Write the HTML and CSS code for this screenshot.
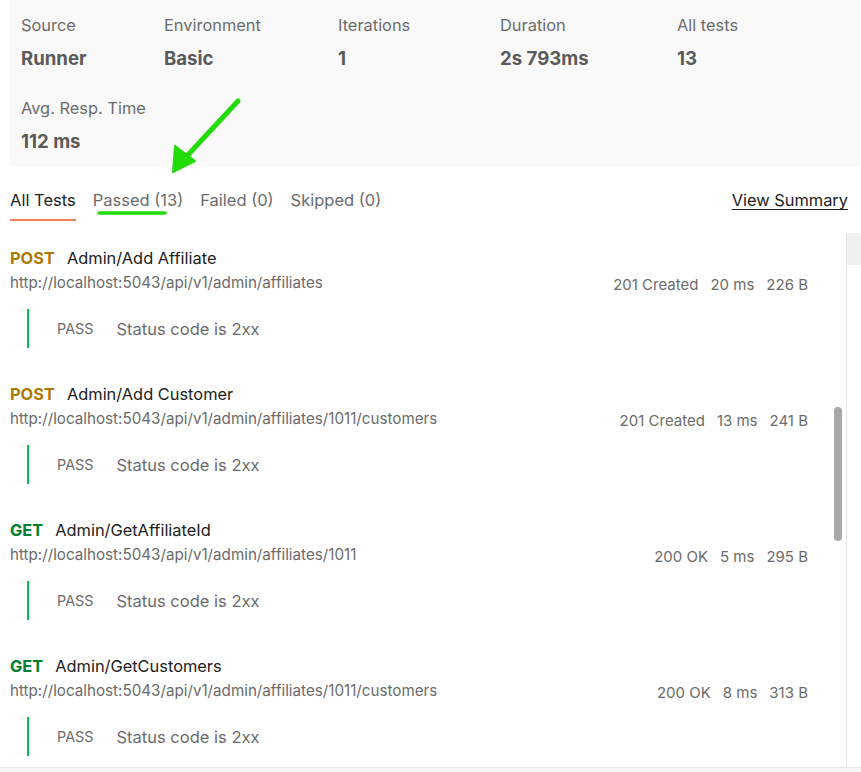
FILE: index.html
```html
<!DOCTYPE html>
<html lang="en">
<head>
<meta charset="utf-8">
<title>Run results</title>
<link rel="stylesheet" href="styles.css">
</head>
<body>
<div class="page">
  <section class="summary">
    <div class="stat"><span class="label">Source</span><span class="value">Runner</span></div>
    <div class="stat"><span class="label">Environment</span><span class="value">Basic</span></div>
    <div class="stat"><span class="label">Iterations</span><span class="value">1</span></div>
    <div class="stat"><span class="label">Duration</span><span class="value">2s 793ms</span></div>
    <div class="stat"><span class="label">All tests</span><span class="value">13</span></div>
    <div class="stat"><span class="label">Avg. Resp. Time</span><span class="value">112 ms</span></div>
  </section>

  <nav class="tabs">
    <div class="tab-list">
      <span class="tab active">All Tests</span>
      <span class="tab">Passed (13)</span>
      <span class="tab">Failed (0)</span>
      <span class="tab">Skipped (0)</span>
    </div>
    <a class="view-summary">View Summary</a>
  </nav>

  <div class="results">
    <div class="list">
      <div class="request">
        <div class="req-title"><span class="method post">POST</span><span class="name">Admin/Add Affiliate</span></div>
        <div class="req-meta">
          <span class="url">http://localhost:5043/api/v1/admin/affiliates</span>
          <span class="stats"><span>201 Created</span><span>20 ms</span><span>226 B</span></span>
        </div>
        <div class="test"><span class="pass">PASS</span><span class="test-name">Status code is 2xx</span></div>
      </div>
      <div class="request">
        <div class="req-title"><span class="method post">POST</span><span class="name">Admin/Add Customer</span></div>
        <div class="req-meta">
          <span class="url">http://localhost:5043/api/v1/admin/affiliates/1011/customers</span>
          <span class="stats"><span>201 Created</span><span>13 ms</span><span>241 B</span></span>
        </div>
        <div class="test"><span class="pass">PASS</span><span class="test-name">Status code is 2xx</span></div>
      </div>
      <div class="request">
        <div class="req-title"><span class="method get">GET</span><span class="name">Admin/GetAffiliateId</span></div>
        <div class="req-meta">
          <span class="url">http://localhost:5043/api/v1/admin/affiliates/1011</span>
          <span class="stats"><span>200 OK</span><span>5 ms</span><span>295 B</span></span>
        </div>
        <div class="test"><span class="pass">PASS</span><span class="test-name">Status code is 2xx</span></div>
      </div>
      <div class="request">
        <div class="req-title"><span class="method get">GET</span><span class="name">Admin/GetCustomers</span></div>
        <div class="req-meta">
          <span class="url">http://localhost:5043/api/v1/admin/affiliates/1011/customers</span>
          <span class="stats"><span>200 OK</span><span>8 ms</span><span>313 B</span></span>
        </div>
        <div class="test"><span class="pass">PASS</span><span class="test-name">Status code is 2xx</span></div>
      </div>
      <div class="scroll-thumb"></div>
    </div>
    <div class="gutter"><div class="gutter-head"></div></div>
  </div>
  <div class="footer"></div>

  <svg class="annotation" width="861" height="772" viewBox="0 0 861 772" aria-hidden="true">
    <line x1="238" y1="101" x2="186" y2="157" stroke="#22dc08" stroke-width="5" stroke-linecap="round"/>
    <polygon points="175,146 195,161 173,172" fill="#22dc08" stroke="#22dc08" stroke-width="2" stroke-linejoin="round"/>
    <line x1="99" y1="213" x2="165" y2="213" stroke="#22dc08" stroke-width="3.5" stroke-linecap="round"/>
  </svg>
</div>
</body>
</html>
```

FILE: styles.css
```css
* { box-sizing: border-box; }
html, body { margin: 0; padding: 0; background: #fff; }
body {
  font-family: Inter, "Noto Sans", "Liberation Sans", sans-serif;
  color: #212121;
  width: 861px;
  height: 772px;
  overflow: hidden;
}
.page { position: relative; height: 772px; display: flex; flex-direction: column; }

.summary {
  margin: 0 1px 0 10px;
  background: #f9f9f9;
  height: 166px;
  padding: 15px 0 0 11px;
  display: grid;
  grid-template-columns: 143px 174px 162px 177px auto;
  row-gap: 27px;
  align-content: start;
}
.stat { display: flex; flex-direction: column; gap: 11px; }
.label { font-size: 16.4px; line-height: 20px; color: #6b6b6b; }
.value { font-size: 18.6px; line-height: 25px; font-weight: 700; color: #5a5a5a; }

.tabs {
  display: flex;
  justify-content: space-between;
  align-items: flex-start;
  padding: 24px 13px 0 10px;
  height: 67px;
}
.tab-list { display: flex; gap: 17px; }
.tab {
  font-size: 16.5px;
  line-height: 20px;
  color: #6b6b6b;
  padding-bottom: 9px;
  border-bottom: 2px solid transparent;
}
.tab.active { color: #212121; border-bottom-color: #f27d5c; }
.view-summary {
  font-size: 16.4px;
  line-height: 20px;
  color: #212121;
  text-decoration: underline;
  text-underline-offset: 3px;
}

.results { display: flex; height: 534px; }
.list {
  position: relative;
  width: 847px;
  border-right: 1px solid #e6e6e6;
  overflow: hidden;
}
.gutter { flex: 1; }
.gutter-head { height: 32px; background: #f0f0f0; }

.request { padding: 15px 38px 21px 10px; }
.req-title { display: flex; gap: 12px; line-height: 20px; font-size: 16.4px; }
.method { font-weight: 700; }
.method.post { color: #ad7a03; }
.method.get { color: #007f31; }
.name { color: #212121; }
.req-meta {
  display: flex;
  justify-content: space-between;
  align-items: flex-start;
  height: 20px;
  margin-top: 5px;
  line-height: 20px;
  font-size: 15px;
  color: #6b6b6b;
}
.url { font-size: 15.2px; }
.stats { display: flex; gap: 12px; padding-top: 2px; }

.test {
  margin: 16px 0 0 17px;
  height: 39px;
  border-left: 2px solid #0cbb52;
  padding-left: 28px;
  display: flex;
  align-items: center;
  gap: 23px;
  color: #6b6b6b;
}
.pass { font-size: 14.4px; }
.test-name { font-size: 16.5px; }

.scroll-thumb {
  position: absolute;
  left: 834px;
  top: 174px;
  width: 8px;
  height: 134px;
  border-radius: 4px;
  background: #a9a9a9;
}

.footer { flex: 1; border-top: 1px solid #e6e6e6; background: #f7f7f7; }

.annotation { position: absolute; left: 0; top: 0; pointer-events: none; }
```
